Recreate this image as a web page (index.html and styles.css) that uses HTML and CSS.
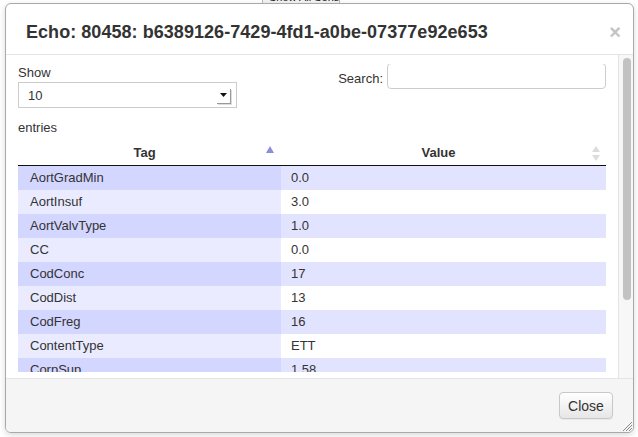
FILE: index.html
```html
<!DOCTYPE html>
<html>
<head>
<meta charset="utf-8">
<link rel="stylesheet" href="styles.css">
</head>
<body>
<div class="backdrop-btn">Show All Sensors Query</div>
<div class="modal">
  <div class="modal-header">
    <h3 class="modal-title">Echo: 80458: b6389126-7429-4fd1-a0be-07377e92e653</h3>
    <span class="close-x">×</span>
  </div>
  <div class="body-wrap">
    <div class="modal-body">
      <div class="clip">
        <div class="controls">
          <div class="length">
            <div class="label">Show</div>
            <div class="fake-select">
              <span class="sel-text">10</span>
              <span class="sel-arrow"><svg width="7" height="4" viewBox="0 0 7 4"><path d="M0 0H7L3.5 4Z" fill="#111"/></svg></span>
            </div>
            <div class="label entries">entries</div>
          </div>
          <div class="filter">
            <span class="label">Search:</span>
            <span class="search-input"></span>
          </div>
        </div>
        <table class="data">
          <thead>
            <tr>
              <th class="col-tag">Tag<svg class="sort-asc" width="8" height="7" viewBox="0 0 8 7"><path d="M4 0L8 7H0Z" fill="#8a8fd6"/></svg></th>
              <th class="col-val">Value<svg class="sort-both" width="8" height="15" viewBox="0 0 8 15"><path d="M4 0L8 6H0Z" fill="#dcdcdc"/><path d="M4 15L8 9H0Z" fill="#dcdcdc"/></svg></th>
            </tr>
          </thead>
          <tbody>
            <tr class="odd"><td class="s1">AortGradMin</td><td>0.0</td></tr>
            <tr class="even"><td class="s1">AortInsuf</td><td>3.0</td></tr>
            <tr class="odd"><td class="s1">AortValvType</td><td>1.0</td></tr>
            <tr class="even"><td class="s1">CC</td><td>0.0</td></tr>
            <tr class="odd"><td class="s1">CodConc</td><td>17</td></tr>
            <tr class="even"><td class="s1">CodDist</td><td>13</td></tr>
            <tr class="odd"><td class="s1">CodFreg</td><td>16</td></tr>
            <tr class="even"><td class="s1">ContentType</td><td>ETT</td></tr>
            <tr class="odd"><td class="s1">CorpSup</td><td>1.58</td></tr>
          </tbody>
        </table>
      </div>
    </div>
    <div class="scrollbar"><div class="thumb"></div></div>
  </div>
  <div class="modal-footer">
    <button class="btn">Close</button>
    <svg class="grip" width="10" height="10" viewBox="0 0 10 10"><path d="M10 1L1 10M10 4L4 10M10 7L7 10" stroke="#888" stroke-width="1"/></svg>
  </div>
</div>
</body>
</html>
```

FILE: styles.css
```css
html, body {
  margin: 0;
  padding: 0;
  background: #fff;
  width: 638px;
  height: 437px;
  overflow: hidden;
  font-family: "Liberation Sans", Arial, sans-serif;
  color: #333;
}

.backdrop-btn {
  position: absolute;
  left: 262px;
  top: -15px;
  width: 70px;
  height: 17px;
  border: 1px solid #bbb;
  font-size: 11px;
  line-height: 22px;
  white-space: nowrap;
  overflow: hidden;
  padding-left: 6px;
  color: #222;
  background: #f3f3f3;
}

.modal {
  position: absolute;
  left: 5px;
  top: 3px;
  width: 627px;
  height: 428px;
  border: 1px solid #a9a9a9;
  border-radius: 6px;
  background: #fff;
  display: flex;
  flex-direction: column;
  overflow: hidden;
  box-shadow: 0 2px 6px rgba(0,0,0,0.15);
}

.modal-header {
  height: 50px;
  flex: none;
  border-bottom: 1px solid #e5e5e5;
  display: flex;
  align-items: center;
  justify-content: space-between;
  padding: 0 12px 0 20px;
}

.modal-title {
  margin: 0;
  font-size: 18px;
  font-weight: bold;
  color: #333;
  padding-top: 6px;
  letter-spacing: 0.05px;
}

.close-x {
  font-size: 20px;
  font-weight: bold;
  color: #c4c4c4;
  line-height: 20px;
  padding-top: 6px;
}

.body-wrap {
  flex: 1;
  display: flex;
  min-height: 0;
}

.modal-body {
  flex: 1;
  display: flex;
  flex-direction: column;
  min-height: 0;
  padding: 9px 11px 6px 12px;
  font-size: 13px;
}

.clip {
  flex: 1;
  min-height: 0;
  overflow: hidden;
}

.scrollbar {
  flex: none;
  width: 15px;
  background: #f7f7f7;
  border-left: 1px solid #e4e4e4;
  padding: 3px 2px 0 4px;
  box-sizing: border-box;
}

.thumb {
  width: 8px;
  height: 242px;
  border-radius: 4px;
  background: #c2c2c2;
}

.controls {
  display: flex;
  justify-content: space-between;
  align-items: flex-start;
}

.label {
  line-height: 18px;
  font-size: 13px;
}

.entries {
  margin-top: 11px;
}

.fake-select {
  height: 24px;
  border: 1px solid #ccc;
  display: flex;
  align-items: center;
  justify-content: space-between;
  padding: 0 3px 0 9px;
  width: 205px;
}

.sel-text {
  font-size: 13px;
}

.sel-arrow {
  width: 14px;
  height: 15px;
  display: flex;
  align-items: center;
  justify-content: center;
  background: #fff;
  box-shadow: 1px 1px 0 #999, 2px 2px 0 #ddd;
  margin-right: 3px;
}

.filter {
  display: flex;
  align-items: center;
  gap: 4px;
  margin-top: -1px;
  margin-right: 1px;
}

.filter .label {
  padding-top: 6px;
}

.search-input {
  display: block;
  width: 217px;
  height: 24px;
  border: 1px solid #ccc;
  border-radius: 4px;
}

.data {
  margin-top: 4px;
  width: 588px;
  border-collapse: collapse;
  font-size: 13px;
}

.data th {
  font-weight: bold;
  height: 24px;
  padding: 0 20px 0 10px;
  border-bottom: 1px solid #111;
  position: relative;
  text-align: center;
  line-height: 24px;
}

.col-tag { width: 233px; }

.sort-asc {
  position: absolute;
  right: 7px;
  top: 5px;
}

.sort-both {
  position: absolute;
  right: 6px;
  top: 5px;
}

.data td {
  height: 24px;
  padding: 0 10px 0 12px;
  line-height: 24px;
}
.data td + td { padding-left: 10px; }

tr.odd td { background: #e2e4ff; }
tr.odd td.s1 { background: #d3d6ff; }
tr.even td { background: #fff; }
tr.even td.s1 { background: #eaebff; }

.modal-footer {
  flex: none;
  height: 53px;
  border-top: 1px solid #e5e5e5;
  background: #f5f5f5;
  display: flex;
  align-items: center;
  justify-content: flex-end;
  padding-right: 20px;
  position: relative;
}

.btn {
  width: 54px;
  height: 27px;
  font-family: "Liberation Sans", Arial, sans-serif;
  font-size: 14px;
  color: #333;
  border: 1px solid #c8c8c8;
  border-radius: 4px;
  background: linear-gradient(#fff, #e6e6e6);
  padding: 0;
  box-shadow: 0 1px 1px rgba(0,0,0,0.05);
}

.grip {
  position: absolute;
  right: 1px;
  bottom: 1px;
}
```
